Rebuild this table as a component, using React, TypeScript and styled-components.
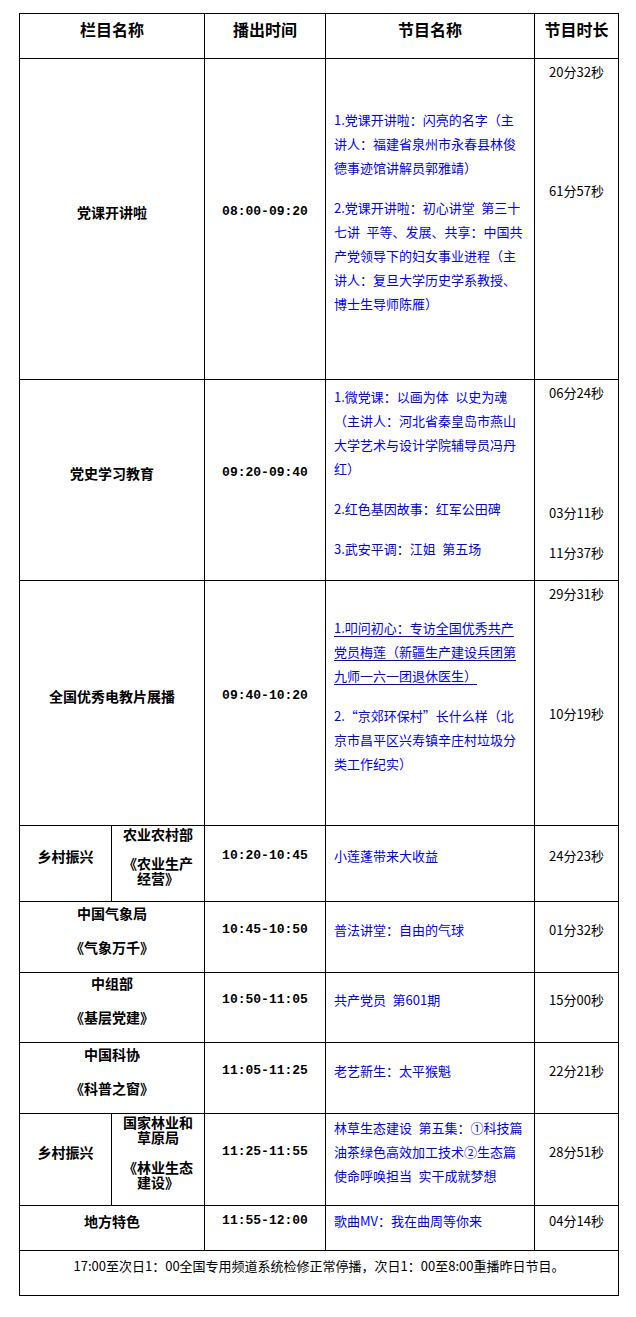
import styled, { createGlobalStyle } from "styled-components";

const GlobalStyle = createGlobalStyle`
  html, body {
    margin: 0;
    padding: 0;
    background: #fff;
  }
  body {
    font-family: "Noto Sans CJK SC", sans-serif;
    color: #000;
  }
`;

const Page = styled.div`
  padding: 13px 0 22px 19px;
`;

const Table = styled.table`
  border-collapse: collapse;
  table-layout: fixed;
  width: 600px;
  font-family: "Noto Sans CJK SC", sans-serif;
`;

const Row = styled.tr<{ $h: number }>`
  height: ${({ $h }) => $h}px;
`;

const HeadCell = styled.th`
  border: 1px solid #000;
  padding: 0 4px 15px;
  font-size: 16px;
  line-height: 20px;
  font-weight: 700;
  text-align: center;
  vertical-align: middle;
`;

const NameCell = styled.td`
  border: 1px solid #000;
  padding: 0 4px 15px;
  font-size: 14px;
  line-height: 16px;
  font-weight: 700;
  text-align: center;
  vertical-align: middle;
`;

const NameLine = styled.div<{ $gap?: number; $lh?: number }>`
  margin-top: ${({ $gap }) => $gap ?? 0}px;
  line-height: ${({ $lh }) => $lh ?? 16}px;
`;

const TimeCell = styled.td`
  border: 1px solid #000;
  padding: 0 4px 15px;
  font-family: "Liberation Mono", "DejaVu Sans Mono", monospace;
  font-size: 13px;
  line-height: 24px;
  font-weight: 700;
  text-align: center;
  vertical-align: middle;
`;

const ShowCell = styled.td`
  border: 1px solid #000;
  padding: 0 6px 15px 8px;
  font-size: 13px;
  line-height: 24px;
  color: #0000ff;
  text-align: left;
  vertical-align: middle;
  white-space: nowrap;
  overflow: hidden;
`;

const Para = styled.p<{ $gap?: number; $underline?: boolean }>`
  margin: ${({ $gap }) => $gap ?? 0}px 0 0;
  text-decoration: ${({ $underline }) => ($underline ? "underline" : "none")};
  text-underline-offset: 3px;
`;

const LenCell = styled.td<{ $top?: boolean }>`
  border: 1px solid #000;
  padding: ${({ $top }) => ($top ? "1px 4px 0" : "0 4px 15px")};
  font-size: 13px;
  line-height: 24px;
  text-align: center;
  vertical-align: ${({ $top }) => ($top ? "top" : "middle")};
`;

const Len = styled.div<{ $gap?: number }>`
  margin-top: ${({ $gap }) => $gap ?? 0}px;
`;

const NoteCell = styled.td`
  border: 1px solid #000;
  padding: 0 4px 15px;
  font-size: 13px;
  line-height: 24px;
  text-align: center;
  vertical-align: middle;
`;

// half-width gap as in the original document
const S = "\u2002";

export default function App() {
  return (
    <>
      <GlobalStyle />
      <Page>
        <Table>
          <colgroup>
            <col style={{ width: 92 }} />
            <col style={{ width: 93 }} />
            <col style={{ width: 121 }} />
            <col style={{ width: 209 }} />
            <col style={{ width: 84 }} />
          </colgroup>
          <tbody>
            <Row $h={45}>
              <HeadCell colSpan={2}>栏目名称</HeadCell>
              <HeadCell>播出时间</HeadCell>
              <HeadCell>节目名称</HeadCell>
              <HeadCell>节目时长</HeadCell>
            </Row>

            <Row $h={321}>
              <NameCell colSpan={2}>党课开讲啦</NameCell>
              <TimeCell>08:00-09:20</TimeCell>
              <ShowCell>
                <Para>
                  1.党课开讲啦：闪亮的名字（主
                  <br />
                  讲人：福建省泉州市永春县林俊
                  <br />
                  德事迹馆讲解员郭雅靖）
                </Para>
                <Para $gap={16}>
                  2.党课开讲啦：初心讲堂{S}第三十
                  <br />
                  七讲{S}平等、发展、共享：中国共
                  <br />
                  产党领导下的妇女事业进程（主
                  <br />
                  讲人：复旦大学历史学系教授、
                  <br />
                  博士生导师陈雁）
                </Para>
              </ShowCell>
              <LenCell $top>
                <Len>20分32秒</Len>
                <Len $gap={95}>61分57秒</Len>
              </LenCell>
            </Row>

            <Row $h={201}>
              <NameCell colSpan={2}>党史学习教育</NameCell>
              <TimeCell>09:20-09:40</TimeCell>
              <ShowCell>
                <Para>
                  1.微党课：以画为体{S}以史为魂
                  <br />
                  （主讲人：河北省秦皇岛市燕山
                  <br />
                  大学艺术与设计学院辅导员冯丹
                  <br />
                  红）
                </Para>
                <Para $gap={16}>2.红色基因故事：红军公田碑</Para>
                <Para $gap={16}>3.武安平调：江姐{S}第五场</Para>
              </ShowCell>
              <LenCell $top>
                <Len>06分24秒</Len>
                <Len $gap={96}>03分11秒</Len>
                <Len $gap={16}>11分37秒</Len>
              </LenCell>
            </Row>

            <Row $h={245}>
              <NameCell colSpan={2}>全国优秀电教片展播</NameCell>
              <TimeCell>09:40-10:20</TimeCell>
              <ShowCell>
                <Para $underline>
                  1.叩问初心：专访全国优秀共产
                  <br />
                  党员梅莲（新疆生产建设兵团第
                  <br />
                  九师一六一团退休医生）
                </Para>
                <Para $gap={16}>
                  2.“京郊环保村”长什么样（北
                  <br />
                  京市昌平区兴寿镇辛庄村垃圾分
                  <br />
                  类工作纪实）
                </Para>
              </ShowCell>
              <LenCell $top>
                <Len>29分31秒</Len>
                <Len $gap={96}>10分19秒</Len>
              </LenCell>
            </Row>

            <Row $h={76}>
              <NameCell>乡村振兴</NameCell>
              <NameCell>
                <NameLine $lh={15}>农业农村部</NameLine>
                <NameLine $lh={15} $gap={14}>
                  《农业生产
                </NameLine>
                <NameLine $lh={15}>经营》</NameLine>
              </NameCell>
              <TimeCell>10:20-10:45</TimeCell>
              <ShowCell>
                <Para>小莲蓬带来大收益</Para>
              </ShowCell>
              <LenCell>24分23秒</LenCell>
            </Row>

            <Row $h={71}>
              <NameCell colSpan={2}>
                <NameLine>中国气象局</NameLine>
                <NameLine $gap={18}>《气象万千》</NameLine>
              </NameCell>
              <TimeCell>10:45-10:50</TimeCell>
              <ShowCell>
                <Para>普法讲堂：自由的气球</Para>
              </ShowCell>
              <LenCell>01分32秒</LenCell>
            </Row>

            <Row $h={70}>
              <NameCell colSpan={2}>
                <NameLine>中组部</NameLine>
                <NameLine $gap={18}>《基层党建》</NameLine>
              </NameCell>
              <TimeCell>10:50-11:05</TimeCell>
              <ShowCell>
                <Para>共产党员{S}第601期</Para>
              </ShowCell>
              <LenCell>15分00秒</LenCell>
            </Row>

            <Row $h={71}>
              <NameCell colSpan={2}>
                <NameLine>中国科协</NameLine>
                <NameLine $gap={18}>《科普之窗》</NameLine>
              </NameCell>
              <TimeCell>11:05-11:25</TimeCell>
              <ShowCell>
                <Para>老艺新生：太平猴魁</Para>
              </ShowCell>
              <LenCell>22分21秒</LenCell>
            </Row>

            <Row $h={92}>
              <NameCell>乡村振兴</NameCell>
              <NameCell>
                <NameLine $lh={15}>国家林业和</NameLine>
                <NameLine $lh={15}>草原局</NameLine>
                <NameLine $lh={15} $gap={15}>
                  《林业生态
                </NameLine>
                <NameLine $lh={15}>建设》</NameLine>
              </NameCell>
              <TimeCell>11:25-11:55</TimeCell>
              <ShowCell>
                <Para>
                  林草生态建设{S}第五集：①科技篇
                  <br />
                  油茶绿色高效加工技术②生态篇
                  <br />
                  使命呼唤担当{S}实干成就梦想
                </Para>
              </ShowCell>
              <LenCell>28分51秒</LenCell>
            </Row>

            <Row $h={45}>
              <NameCell colSpan={2}>地方特色</NameCell>
              <TimeCell>11:55-12:00</TimeCell>
              <ShowCell>
                <Para>歌曲MV：我在曲周等你来</Para>
              </ShowCell>
              <LenCell>04分14秒</LenCell>
            </Row>

            <Row $h={45}>
              <NoteCell colSpan={5}>
                17:00至次日1：00全国专用频道系统检修正常停播，次日1：00至8:00重播昨日节目。
              </NoteCell>
            </Row>
          </tbody>
        </Table>
      </Page>
    </>
  );
}
